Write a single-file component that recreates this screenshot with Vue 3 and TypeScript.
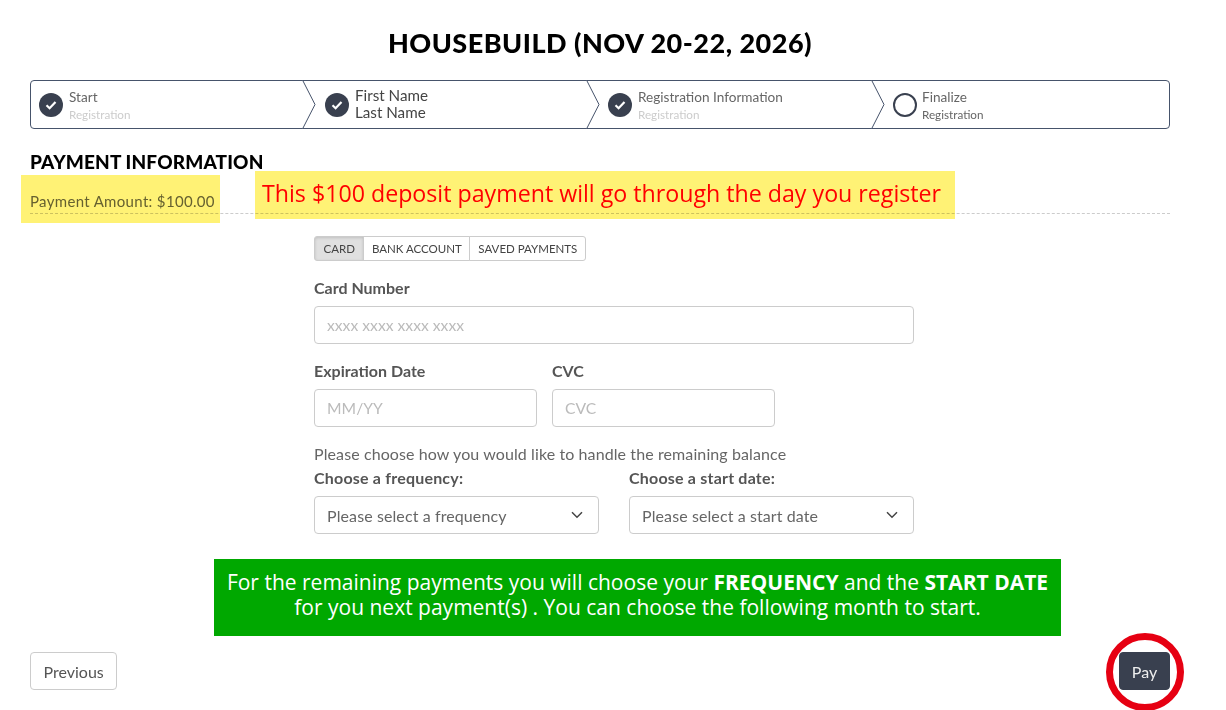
<script setup lang="ts">
interface Step { title: string; sub: string; done: boolean; strong?: boolean }
const steps: Step[] = [
  { title: 'Start', sub: 'Registration', done: true },
  { title: 'First Name', sub: 'Last Name', done: true, strong: true },
  { title: 'Registration Information', sub: 'Registration', done: true },
  { title: 'Finalize', sub: 'Registration', done: false },
]
const tabs = ['CARD', 'BANK ACCOUNT', 'SAVED PAYMENTS']
</script>

<template>
  <div class="page">
    <h1 class="title">HOUSEBUILD (NOV 20-22, 2026)</h1>

    <ol class="stepper">
      <li v-for="(s, i) in steps" :key="s.title" class="step" :class="{ strong: s.strong, current: !s.done }">
        <span class="dot" :class="{ done: s.done }">
          <svg v-if="s.done" width="24" height="24" viewBox="0 0 24 24" aria-hidden="true">
            <path d="M7.5 12.3l3.1 3 5.9-6.2" fill="none" stroke="#fff" stroke-width="2.2" />
          </svg>
        </span>
        <span class="labels">
          <span class="step-title">{{ s.title }}</span>
          <span class="step-sub">{{ s.sub }}</span>
        </span>
        <svg v-if="i < 3" class="chevron" width="14" height="49" viewBox="0 0 14 49" aria-hidden="true">
          <path d="M0.5 0L13 24.5L0.5 49" fill="#fff" stroke="#46536b" stroke-width="1" />
        </svg>
      </li>
    </ol>

    <h2 class="section">PAYMENT INFORMATION</h2>
    <div class="amount">Payment Amount: $100.00</div>

    <div class="form">
      <div class="tabs">
        <button v-for="(t, i) in tabs" :key="t" class="tab" :class="{ active: i === 0 }" type="button">{{ t }}</button>
      </div>

      <label class="label first">Card Number</label>
      <input class="input" placeholder="xxxx xxxx xxxx xxxx" />

      <div class="pair">
        <div class="col">
          <label class="label">Expiration Date</label>
          <input class="input" placeholder="MM/YY" />
        </div>
        <div class="col">
          <label class="label">CVC</label>
          <input class="input" placeholder="CVC" />
        </div>
      </div>

      <p class="hint">Please choose how you would like to handle the remaining balance</p>
      <div class="selects">
        <div class="sel-col">
          <div class="sel-label">Choose a frequency:</div>
          <div class="select">
            <span>Please select a frequency</span>
            <svg width="12" height="8" viewBox="0 0 12 8" aria-hidden="true"><path d="M1 1.2l5 5 5-5" fill="none" stroke="#444" stroke-width="1.5" /></svg>
          </div>
        </div>
        <div class="sel-col">
          <div class="sel-label">Choose a start date:</div>
          <div class="select">
            <span>Please select a start date</span>
            <svg width="12" height="8" viewBox="0 0 12 8" aria-hidden="true"><path d="M1 1.2l5 5 5-5" fill="none" stroke="#444" stroke-width="1.5" /></svg>
          </div>
        </div>
      </div>
    </div>

    <div class="actions">
      <button class="btn" type="button">Previous</button>
      <button class="btn pay" type="button">Pay</button>
    </div>

    <!-- annotations laid over the page -->
    <div class="note-amount"></div>
    <div class="note-deposit">This $100 deposit payment will go through the day you register</div>
    <div class="note-green">
      <div>For the remaining payments you will choose your <b>FREQUENCY</b> and the <b>START DATE</b></div>
      <div>for you next payment(s) . You can choose the following month to start.</div>
    </div>
    <div class="ring"></div>
  </div>
</template>

<style>
html, body { margin: 0; background: #fff; }
</style>

<style scoped>
.page {
  position: relative;
  box-sizing: border-box;
  width: 1226px;
  height: 710px;
  padding: 0 56px 0 30px;
  overflow: hidden;
  font-family: Lato, "Open Sans", sans-serif;
  color: #555;
}
.title {
  margin: 0;
  padding-top: 27px;
  height: 80px;
  box-sizing: border-box;
  line-height: 32px;
  text-align: center;
  font-size: 27px;
  font-weight: 900;
  letter-spacing: 0.5px;
  color: #000;
}
.stepper {
  list-style: none;
  margin: 0;
  padding: 0;
  height: 49px;
  box-sizing: border-box;
  display: grid;
  grid-template-columns: 272px 284px 285px 1fr;
  border: 1px solid #46536b;
  border-radius: 4px;
}
.step {
  position: relative;
  display: flex;
  align-items: center;
  gap: 6px;
  padding-left: 8px;
}
.step + .step { padding-left: 22px; }
.step:nth-child(3) { padding-left: 21px; }
.step:nth-child(4) { padding-left: 21px; gap: 5px; }
.chevron {
  position: absolute;
  right: -13px;
  top: -1px;
  z-index: 1;
}
.dot {
  flex: none;
  width: 24px;
  height: 24px;
  box-sizing: border-box;
  border-radius: 50%;
  border: 2px solid #39404f;
}
.dot.done { background: #39404f; border: 0; }
.dot svg { display: block; }
.labels { display: flex; flex-direction: column; }
.step-title { font-size: 13.6px; line-height: 18px; color: #666; }
.step-sub { font-size: 11.7px; line-height: 16px; color: #ccc; }
.step.strong .labels { margin-top: -2px; }
.step.strong .step-title,
.step.strong .step-sub { font-size: 15.2px; line-height: 17px; color: #444; }
.step.current .step-sub { color: #666; }
.section {
  margin: 22px 0 0;
  font-size: 19px;
  line-height: 22px;
  font-weight: 900;
  letter-spacing: 0.15px;
  color: #000;
}
.amount {
  margin-top: 18px;
  padding-bottom: 2px;
  font-size: 15px;
  line-height: 20px;
  letter-spacing: 0.33px;
  color: #666;
  border-bottom: 1px dashed #ccc;
}
.form {
  width: 600px;
  margin: 22px 0 0 284px;
  font-size: 16px;
}
.tabs { display: flex; height: 25px; }
.tab {
  padding: 0 7.5px;
  margin: 0 0 0 -1px;
  font: 400 11.5px/23px Lato, sans-serif;
  color: #444;
  background: #fff;
  border: 1px solid #ccc;
}
.tab:first-child { margin-left: 0; border-radius: 3px 0 0 3px; padding: 0 8.5px; }
.tab:last-child { border-radius: 0 3px 3px 0; padding: 0 8px; }
.tab.active { background: #e0e0e0; box-shadow: inset 0 1px 3px rgba(0, 0, 0, .15); }
.label {
  display: block;
  margin-bottom: 9px;
  font-size: 16px;
  line-height: 18px;
  font-weight: 700;
  color: #555;
}
.label.first { margin-top: 18px; }
.input {
  display: block;
  width: 100%;
  height: 38px;
  box-sizing: border-box;
  padding: 0 12px;
  font: 400 15.7px Lato, sans-serif;
  color: #555;
  background: #fff;
  border: 1px solid #ccc;
  border-radius: 4px;
  outline: none;
}
.input::placeholder { color: #bbb; }
.pair { display: flex; gap: 15px; margin-top: 18px; }
.col { width: 223px; }
.hint { margin: 18px 0 0; font-size: 16px; line-height: 18px; letter-spacing: 0.1px; color: #666; }
.selects { display: flex; gap: 30px; margin-top: 6px; }
.sel-col { flex: 1; }
.sel-label { font-size: 16px; line-height: 18px; font-weight: 700; letter-spacing: 0.2px; color: #555; margin-bottom: 9px; }
.select {
  display: flex;
  align-items: center;
  justify-content: space-between;
  height: 38px;
  box-sizing: border-box;
  padding: 0 15px 0 12px;
  font-size: 16px;
  letter-spacing: 0.1px;
  color: #666;
  border: 1px solid #ccc;
  border-radius: 4px;
}
.actions {
  position: absolute;
  left: 30px;
  top: 652px;
  width: 1140px;
  display: flex;
  justify-content: space-between;
}
.btn {
  height: 38px;
  padding: 0 12.5px;
  font: 400 16px Lato, sans-serif;
  color: #555;
  background: #fff;
  border: 1px solid #ccc;
  border-radius: 4px;
}
.btn.pay { background: #39404f; border-color: #39404f; color: #eee; width: 51px; padding: 0; }
.note-amount {
  position: absolute;
  left: 21px;
  top: 175px;
  width: 199px;
  height: 48px;
  background: #fff275;
  mix-blend-mode: multiply;
}
.note-deposit {
  position: absolute;
  left: 255px;
  top: 171px;
  width: 700px;
  height: 48px;
  box-sizing: border-box;
  padding-left: 7px;
  font: 400 23.2px/44px "Open Sans", sans-serif;
  color: #f00;
  background: #fff275;
  mix-blend-mode: multiply;
}
.note-green {
  position: absolute;
  left: 214px;
  top: 559px;
  width: 847px;
  height: 77px;
  box-sizing: border-box;
  padding-top: 11px;
  font: 400 21px/25px "Open Sans", sans-serif;
  text-align: center;
  color: #fff;
  background: #00a800;
}
.ring {
  position: absolute;
  left: 1106px;
  top: 633px;
  width: 78px;
  height: 78px;
  box-sizing: border-box;
  border: 7px solid #e60012;
  border-radius: 50%;
}
</style>
